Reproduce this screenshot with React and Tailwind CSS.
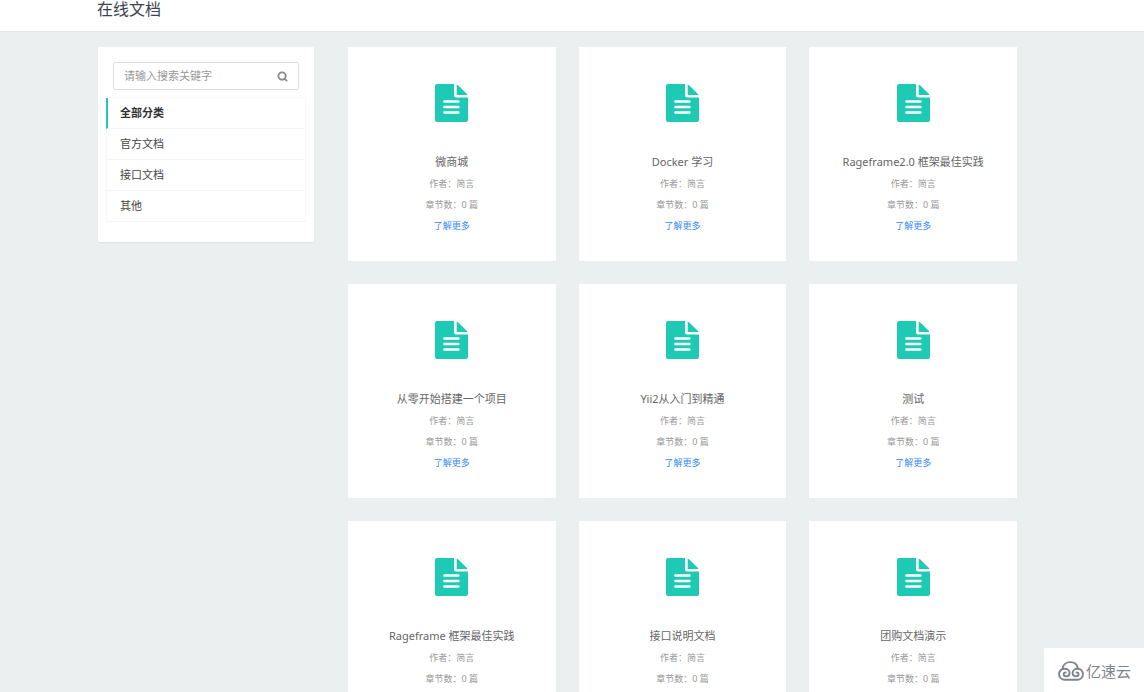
import { Search } from 'lucide-react';

const categories = ['全部分类', '官方文档', '接口文档', '其他'];

const docs = [
  '微商城',
  'Docker 学习',
  'Rageframe2.0 框架最佳实践',
  '从零开始搭建一个项目',
  'Yii2从入门到精通',
  '测试',
  'Rageframe 框架最佳实践',
  '接口说明文档',
  '团购文档演示',
];

function DocIcon() {
  return (
    <svg className="h-[38px] w-[33px] text-[#1fcab4]" viewBox="0 0 33 38" fill="none" aria-hidden="true">
      <path
        fill="currentColor"
        d="M2 0H19V11.5Q19 13.5 21 13.5H33V36Q33 38 31 38H2Q0 38 0 36V2Q0 0 2 0Z"
      />
      <path fill="currentColor" d="M21.7 0.4Q22.6 0.8 23.3 1.5L31.2 9.2Q32 10 32.5 11H21.7Z" />
      <path stroke="#fff" strokeWidth="2.5" strokeLinecap="round" d="M9.4 17.6H23.4M9.4 23H23.4M9.4 28.4H23.4" />
    </svg>
  );
}

function CloudLogo() {
  return (
    <svg
      className="h-5 w-[26px] shrink-0"
      viewBox="0 0 26 20"
      fill="none"
      stroke="currentColor"
      strokeWidth="1.9"
      strokeLinecap="round"
      strokeLinejoin="round"
      aria-hidden="true"
    >
      <path d="M4.6 7.6C5 3.7 8.2 1.1 12.2 1.1C16 1.1 19 3.2 19.8 6.8" />
      <path d="M7.8 11.4C6.6 11.4 5.7 12.2 5.7 13.3C5.7 14.6 6.8 15.4 8.2 15.4C10.3 15.4 11.6 14 11.6 12.1C11.6 9.5 9.4 7.7 6.6 7.7C3.4 7.7 1.1 10 1.1 13.1C1.1 16.4 3.5 18.8 6.8 18.8H19.2C22.6 18.8 24.9 16.4 24.9 13.2C24.9 10 22.6 7.7 19.6 7.7C16.8 7.7 14.6 9.5 14.6 12.1C14.6 14 16 15.4 18 15.4C19.5 15.4 20.6 14.6 20.6 13.3C20.6 12.2 19.7 11.4 18.5 11.4" />
    </svg>
  );
}

function DocCard({ title }) {
  return (
    <article className="flex flex-col items-center bg-white px-3 pt-[37px] pb-[25px] text-center">
      <DocIcon />
      <h2 className="mt-[30px] text-[11px] leading-5 text-[#666]">{title}</h2>
      <div className="mt-px text-[9px] leading-[21px] text-[#999]">
        <p>作者：简言</p>
        <p>章节数：0 篇</p>
        <a href="#" className="block text-[#3388ff]">
          了解更多
        </a>
      </div>
    </article>
  );
}

export default function App() {
  return (
    <div className="h-screen overflow-hidden bg-[#ebeff0] font-['Noto_Sans','Noto_Sans_CJK_SC',sans-serif]">
      <header className="border-b border-[#e4e8ea] bg-white">
        <div className="mx-auto max-w-[950px] pb-[13px]">
          <h1 className="text-base leading-[18px] text-[#3c4353]">在线文档</h1>
        </div>
      </header>

      <div className="mx-auto flex max-w-[948px] items-start gap-[34px] pt-[15px] pr-[29px]">
        <aside className="w-[216px] shrink-0 rounded-xs bg-white pt-[15px] pb-5 shadow-xs">
          <form className="mx-[15px] flex h-7 items-center rounded-xs border border-[#dcdfe2] px-2.5">
            <input
              type="text"
              aria-label="搜索关键字"
              placeholder="请输入搜索关键字"
              className="min-w-0 flex-1 bg-transparent text-[11px] text-[#555] outline-none placeholder:text-[#999]"
            />
            <button type="button" aria-label="搜索" className="text-[#8a8a8a]">
              <Search size={11} strokeWidth={4} />
            </button>
          </form>
          <nav className="mx-2 mt-[7px] border-t border-r border-[#f7f7f7]">
            {categories.map((name, i) => (
              <a
                key={name}
                href="#"
                className={
                  i === 0
                    ? 'block border-b border-b-[#f5f5f5] border-l-2 border-l-[#1fcab4] pl-3 text-[11px] leading-[30px] font-bold text-[#333]'
                    : 'block border-b border-b-[#f5f5f5] border-l border-l-[#f7f7f7] pl-[13px] text-[11px] leading-[30px] text-[#444]'
                }
              >
                {name}
              </a>
            ))}
          </nav>
        </aside>

        <main className="grid flex-1 grid-cols-3 gap-[23px]">
          {docs.map((title) => (
            <DocCard key={title} title={title} />
          ))}
        </main>
      </div>

      <div className="fixed right-0 bottom-0 flex h-11 w-[100px] items-center gap-0.5 bg-white pt-0.5 pl-3.5 text-[#7f848c]">
        <CloudLogo />
        <span className="text-[15px] leading-5">亿速云</span>
      </div>
    </div>
  );
}
